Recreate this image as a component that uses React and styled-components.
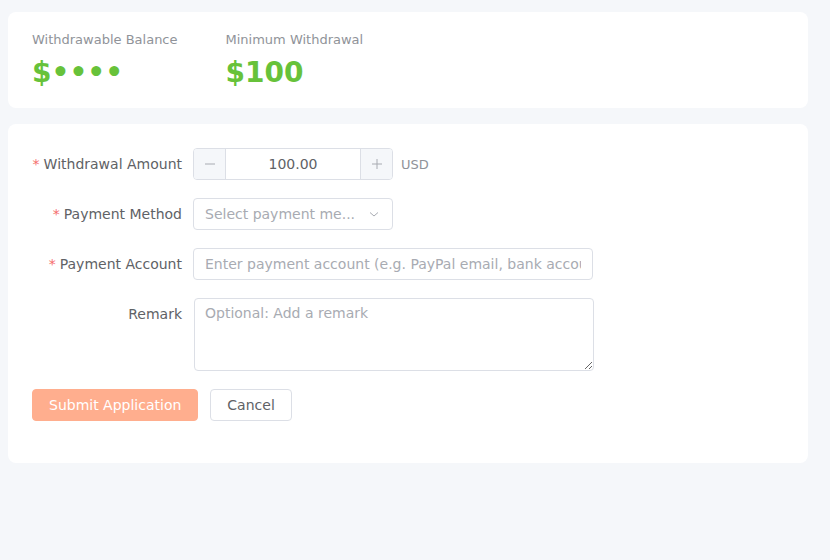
import React from "react";
import styled, { createGlobalStyle } from "styled-components";

const GlobalStyle = createGlobalStyle`
  html, body {
    margin: 0;
    padding: 0;
    background: #f5f7fa;
    font-family: "DejaVu Sans", "Noto Sans", sans-serif;
  }
  * { box-sizing: border-box; }
`;

const Page = styled.div`
  padding: 12px 22px 12px 8px;
  display: flex;
  flex-direction: column;
  gap: 16px;
`;

const Card = styled.div`
  background: #fff;
  border-radius: 8px;
  padding: ${(p) => p.$padding || "24px"};
`;

const Stats = styled.div`
  display: flex;
  gap: 48px;
`;

const Stat = styled.div`
  display: flex;
  flex-direction: column;
`;

const StatLabel = styled.div`
  font-size: 13px;
  line-height: 18px;
  color: #909399;
  margin-bottom: 7px;
`;

const StatValue = styled.div`
  font-size: 28px;
  line-height: 34px;
  font-weight: bold;
  color: #67c23a;
`;

const FormItem = styled.div`
  display: flex;
  align-items: flex-start;
  margin-bottom: 18px;
`;

const Label = styled.label`
  width: 162px;
  flex: none;
  padding-right: 12px;
  text-align: right;
  font-size: 14px;
  line-height: 32px;
  color: #606266;
`;

const Star = styled.span`
  color: #f56c6c;
  margin-right: 4px;
`;

const Control = styled.div`
  display: flex;
  align-items: center;
  gap: 8px;
`;

const NumberBox = styled.div`
  width: 200px;
  height: 32px;
  display: flex;
  border: 1px solid #dcdfe6;
  border-radius: 4px;
  overflow: hidden;
  margin-left: -1px;
`;

const StepButton = styled.span`
  width: 32px;
  flex: none;
  display: flex;
  align-items: center;
  justify-content: center;
  background: #f5f7fa;
  color: #a8abb2;
  ${(p) => (p.$side === "left" ? "border-right" : "border-left")}: 1px solid #dcdfe6;
`;

const NumberValue = styled.span`
  flex: 1;
  text-align: center;
  font-size: 14px;
  line-height: 30px;
  color: #606266;
`;

const Unit = styled.span`
  font-size: 13px;
  color: #909399;
`;

const SelectBox = styled.div`
  width: 200px;
  height: 32px;
  margin-left: -1px;
  display: flex;
  align-items: center;
  justify-content: space-between;
  padding: 0 12px 0 11px;
  border: 1px solid #dcdfe6;
  border-radius: 4px;
  font-size: 14px;
  color: #a8abb2;
`;

const Placeholder = styled.span`
  white-space: nowrap;
  overflow: hidden;
  text-overflow: ellipsis;
`;

const TextInput = styled.input`
  width: 400px;
  height: 32px;
  margin-left: -1px;
  padding: 0 11px;
  border: 1px solid #dcdfe6;
  border-radius: 4px;
  font: inherit;
  font-size: 14px;
  color: #606266;
  outline: none;
  &::placeholder { color: #a8abb2; }
`;

const TextArea = styled.textarea`
  width: 400px;
  height: 73px;
  padding: 4px 10px;
  border: 1px solid #dcdfe6;
  border-radius: 4px;
  font: inherit;
  font-size: 14px;
  line-height: 1.5;
  color: #606266;
  resize: vertical;
  outline: none;
  &::placeholder { color: #a8abb2; }
`;

const Actions = styled.div`
  display: flex;
  gap: 12px;
  margin-bottom: 18px;
`;

const Button = styled.button`
  height: 32px;
  padding: 0 16px;
  border-radius: 4px;
  font: inherit;
  font-size: 14px;
  border: 1px solid ${(p) => (p.$primary ? "#ffae8e" : "#dcdfe6")};
  background: ${(p) => (p.$primary ? "#ffae8e" : "#fff")};
  color: ${(p) => (p.$primary ? "#fff" : "#606266")};
  cursor: pointer;
`;

const Chevron = () => (
  <svg width="12" height="12" viewBox="0 0 12 12" fill="none" stroke="#a8abb2" strokeWidth="1">
    <path d="M2 4.5 L6 8 L10 4.5" />
  </svg>
);

const Minus = () => (
  <svg width="14" height="14" viewBox="0 0 14 14" stroke="currentColor" strokeWidth="1">
    <path d="M2 7 H12" />
  </svg>
);

const Plus = () => (
  <svg width="14" height="14" viewBox="0 0 14 14" stroke="currentColor" strokeWidth="1">
    <path d="M2 7 H12 M7 2 V12" />
  </svg>
);

const App = () => (
  <>
    <GlobalStyle />
    <Page>
      <Card $padding="19px 24px 18px">
        <Stats>
          <Stat>
            <StatLabel>Withdrawable Balance</StatLabel>
            <StatValue>$••••</StatValue>
          </Stat>
          <Stat>
            <StatLabel>Minimum Withdrawal</StatLabel>
            <StatValue>$100</StatValue>
          </Stat>
        </Stats>
      </Card>

      <Card>
        <FormItem>
          <Label><Star>*</Star>Withdrawal Amount</Label>
          <Control>
            <NumberBox>
              <StepButton $side="left"><Minus /></StepButton>
              <NumberValue>100.00</NumberValue>
              <StepButton $side="right"><Plus /></StepButton>
            </NumberBox>
            <Unit>USD</Unit>
          </Control>
        </FormItem>

        <FormItem>
          <Label><Star>*</Star>Payment Method</Label>
          <SelectBox>
            <Placeholder>Select payment me...</Placeholder>
            <Chevron />
          </SelectBox>
        </FormItem>

        <FormItem>
          <Label><Star>*</Star>Payment Account</Label>
          <TextInput placeholder="Enter payment account (e.g. PayPal email, bank account)" />
        </FormItem>

        <FormItem>
          <Label>Remark</Label>
          <TextArea placeholder="Optional: Add a remark" />
        </FormItem>

        <Actions>
          <Button $primary>Submit Application</Button>
          <Button>Cancel</Button>
        </Actions>
      </Card>
    </Page>
  </>
);

export default App;
